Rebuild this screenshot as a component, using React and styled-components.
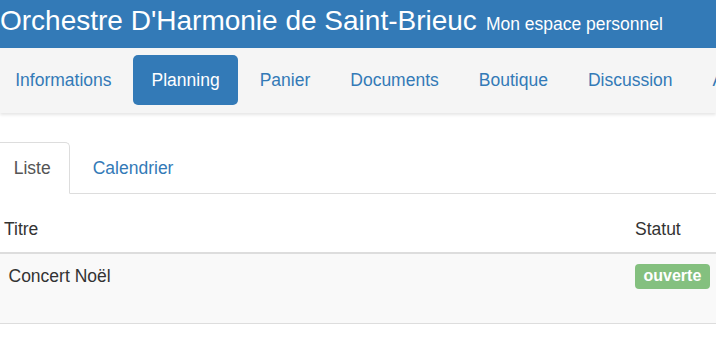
import React from 'react';
import styled, { createGlobalStyle } from 'styled-components';

const GlobalStyle = createGlobalStyle`
  html, body {
    margin: 0;
    padding: 0;
    background: #fff;
    overflow: hidden;
  }
  body {
    font-family: "Liberation Sans", Arial, Helvetica, sans-serif;
    font-size: 17.5px;
    line-height: 25px;
    color: #333;
  }
  * { box-sizing: border-box; }
`;

const Header = styled.header`
  height: 48px;
  background: #337ab7;
  color: #fff;
  display: flex;
  align-items: baseline;
  padding-top: 3px;
  white-space: nowrap;
`;

const Title = styled.h1`
  margin: 0;
  font-size: 28px;
  line-height: 36px;
  font-weight: normal;
`;

const Subtitle = styled.small`
  margin-left: 9px;
  font-size: 17.5px;
`;

const NavBar = styled.nav`
  height: 65px;
  background: #f5f5f5;
  box-shadow: 0 2px 3px rgba(0, 0, 0, 0.1);
  padding-top: 7px;
  position: relative;
`;

const Pills = styled.ul`
  list-style: none;
  margin: 0 0 0 -3.5px;
  padding: 0;
  display: flex;
  gap: 2.5px;
  white-space: nowrap;
`;

const Pill = styled.li`
  a {
    display: block;
    padding: 12.5px 18.75px;
    border-radius: 5px;
    text-decoration: none;
    color: ${p => (p.$active ? '#fff' : '#337ab7')};
    background: ${p => (p.$active ? '#337ab7' : 'transparent')};
  }
`;

const Content = styled.main`
  width: 727px;
  margin-left: -6px;
  padding-top: 29px;
`;

const Tabs = styled.ul`
  list-style: none;
  margin: 0;
  padding: 0;
  display: flex;
  gap: 2.5px;
  border-bottom: 1px solid #ddd;
`;

const Tab = styled.li`
  margin-bottom: -1px;
  a {
    display: block;
    padding: 12.5px 18.75px;
    border: 1px solid ${p => (p.$active ? '#ddd' : 'transparent')};
    border-bottom-color: ${p => (p.$active ? '#fff' : 'transparent')};
    border-radius: 5px 5px 0 0;
    background: ${p => (p.$active ? '#fff' : 'transparent')};
    color: ${p => (p.$active ? '#555' : '#337ab7')};
    text-decoration: none;
  }
`;

const Table = styled.div`
  margin-top: 13px;
`;

const Row = styled.div`
  display: grid;
  grid-template-columns: 1fr 96px;
  background: ${p => (p.$striped ? '#f9f9f9' : 'transparent')};
  border-bottom: ${p => (p.$head ? '2px' : '1px')} solid #ddd;
`;

const HeadCell = styled.div`
  padding: 10px;
`;

const Cell = styled.div`
  padding: 10px 10px 10px ${p => (p.$first ? '14.5px' : '10px')};
  min-height: 69px;
`;

const Label = styled.span`
  display: inline-block;
  vertical-align: top;
  background: #84c07f;
  color: #fff;
  font-weight: bold;
  font-size: 16px;
  line-height: 16px;
  padding: 4px 8.5px 5px;
  border-radius: 4px;
`;

const navItems = ['Informations', 'Planning', 'Panier', 'Documents', 'Boutique', 'Discussion', 'Annuaire'];

export default function App() {
  return (
    <>
      <GlobalStyle />
      <Header>
        <Title>Orchestre D'Harmonie de Saint-Brieuc</Title>
        <Subtitle>Mon espace personnel</Subtitle>
      </Header>
      <NavBar>
        <Pills>
          {navItems.map(item => (
            <Pill key={item} $active={item === 'Planning'}>
              <a href="#">{item}</a>
            </Pill>
          ))}
        </Pills>
      </NavBar>
      <Content>
        <Tabs>
          <Tab $active><a href="#">Liste</a></Tab>
          <Tab><a href="#">Calendrier</a></Tab>
        </Tabs>
        <Table>
          <Row $head>
            <HeadCell>Titre</HeadCell>
            <HeadCell>Statut</HeadCell>
          </Row>
          <Row $striped>
            <Cell $first>Concert Noël</Cell>
            <Cell><Label>ouverte</Label></Cell>
          </Row>
        </Table>
      </Content>
    </>
  );
}
